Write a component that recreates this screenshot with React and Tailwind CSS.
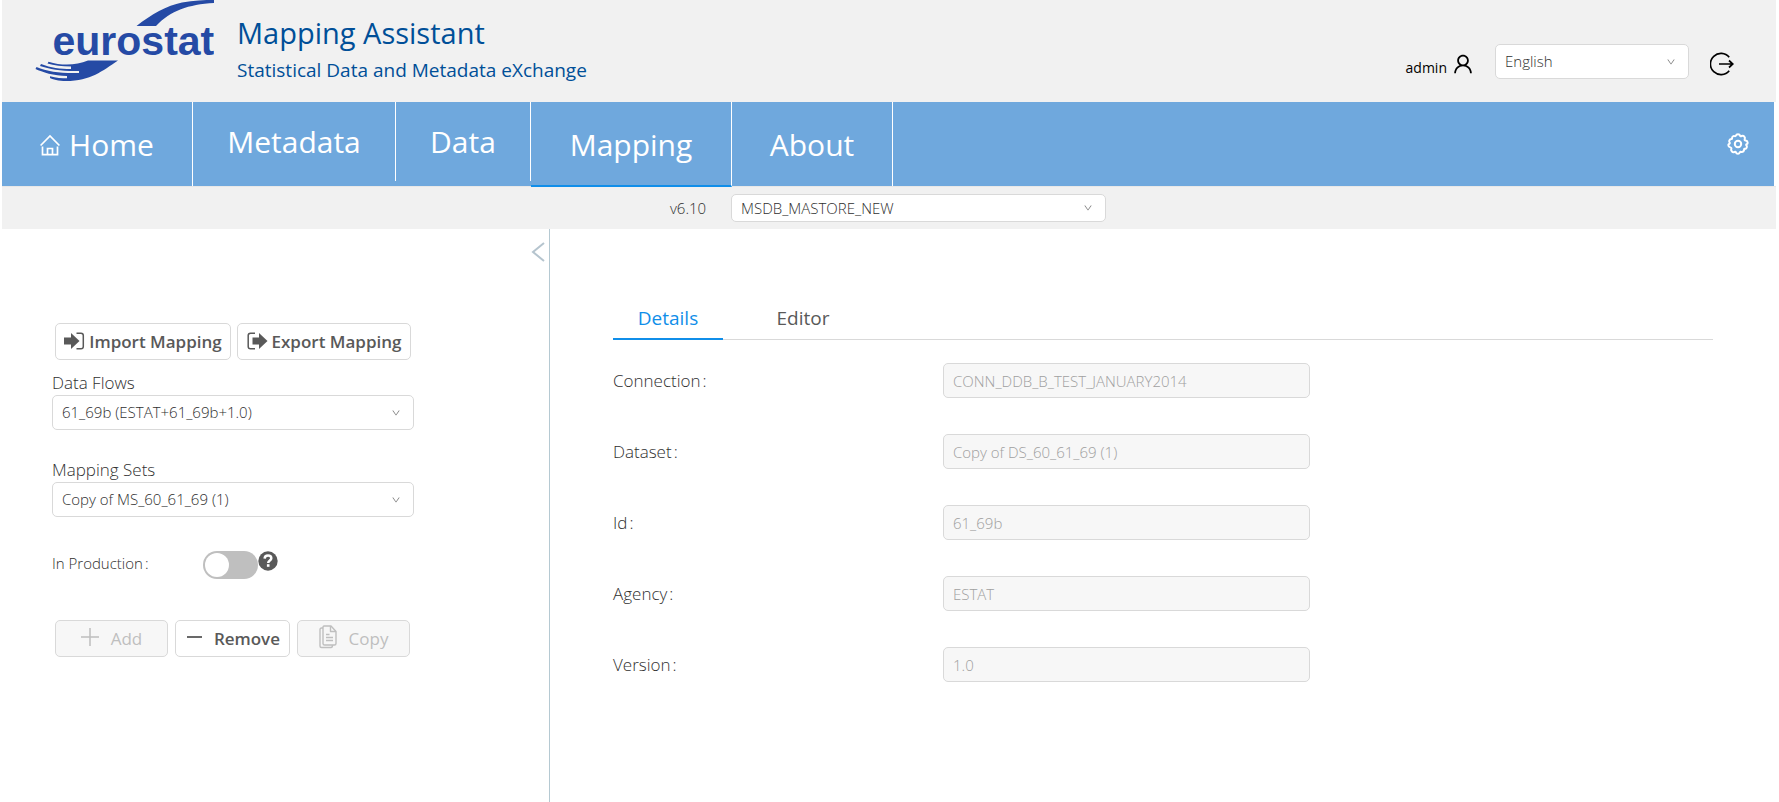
import React from "react";
import { AiOutlineUser, AiOutlineDown } from "react-icons/ai";

const FIELDS = [
  ["connection", "Connection", "CONN_DDB_B_TEST_JANUARY2014"],
  ["dataset", "Dataset", "Copy of DS_60_61_69 (1)"],
  ["id", "Id", "61_69b"],
  ["agency", "Agency", "ESTAT"],
  ["version", "Version", "1.0"],
];

function Select({ id, label, value, className = "h-[35px]" }) {
  return (
    <div className="grid items-center">
      <select
        id={id}
        aria-label={label}
        className={`col-start-1 row-start-1 w-full appearance-none rounded-[5px] border border-[#d9d9d9] bg-white pl-[9px] pr-8 text-[15px] font-light text-[#303030] outline-none ${className}`}
      >
        <option>{value}</option>
      </select>
      <AiOutlineDown className="pointer-events-none col-start-1 row-start-1 mr-[13px] size-[10px] justify-self-end text-[#777777]" />
    </div>
  );
}

function Logo() {
  return (
    <svg viewBox="0 0 184 84" className="h-[84px] w-[184px] shrink-0" role="img" aria-label="eurostat">
      <g fill="#254aa5">
        <path d="M106.500 26C121 14.500 137 5.500 152 2.500C164 0.500 174 0 184 0V3C158 4.500 141 10.500 126 26Z" />
        <text x="22.500" y="54.500" fontSize="41" fontWeight="700" fontFamily="'Liberation Sans', Arial, sans-serif">eurostat</text>
        <path d="M58 60.500H88C72 71 61 81 36 81C29 81 22 79.500 20 78V76.300C26 78 32 78.300 37 78.300V76C24 76 12 72 5.500 69L6.500 67C18 72 32 73.500 49 73V71C34 71.500 20 69.500 10 66L11 64C21 68 30 69 41 69V66.500C32 66.500 24 65.500 17.500 63.500L18.500 61.700C32 66 46 65.500 58 60.500Z" />
      </g>
    </svg>
  );
}

function HomeIcon() {
  return (
    <svg viewBox="0 0 20 22" className="mt-[2px] h-[22px] w-5" fill="none" stroke="currentColor" strokeWidth="1.700">
      <path d="M0.600 11.500L10 2L19.400 11.500" />
      <path d="M2.500 12.500V20.700H17.500V12.500M7.500 20.500V14.500H12.500V20.500" />
    </svg>
  );
}

function LogoutIcon() {
  return (
    <svg viewBox="0 0 24 24" className="size-6" fill="none" stroke="currentColor" strokeWidth="1.700">
      <path d="M19.200 5.300A10.600 10.600 0 1 0 19.200 18.700" />
      <path d="M9 12H22.500M19 8.500L22.800 12L19 15.500" />
    </svg>
  );
}

function GearIcon() {
  return (
    <svg viewBox="0 0 22 22" className="size-[22px]" fill="none" stroke="currentColor" strokeWidth="2" strokeLinejoin="round">
      <path d="M9 2.500Q9.300 1.200 11 1.200Q12.700 1.200 13 2.500Q13.300 3.600 14.600 3Q16.200 2.300 17.300 3.600Q18.400 4.900 17.700 6.100Q17.300 7.300 18.700 7.600Q20.600 8 20.700 9.800Q20.600 11 19.400 11.300Q18.800 11.800 19.600 12.600Q20.400 14 19.300 15.200Q18.400 16 17.600 15.700Q16.900 15.800 17.100 17Q16.800 18.800 15 19Q14 18.900 13.500 18.700Q13 18.800 12.700 19.700Q12.200 20.800 11 20.800Q9.300 20.800 9 19.500Q8.700 18.400 7.400 19Q5.800 19.500 4.800 18.300Q3.700 17.100 4.300 15.900Q4.700 14.800 3.300 14.400Q1.300 13.800 1.300 12Q1.500 11 2.500 10.700Q3.200 10.200 2.500 9.300Q1.600 8 2.800 6.700Q3.600 5.900 4.500 6.100Q5.300 6 5 5Q5.200 3.300 6.900 2.900Q8.600 3.500 9 2.500Z" />
      <circle cx="11" cy="11" r="3.200" />
    </svg>
  );
}

function ImportIcon() {
  return (
    <svg viewBox="0 0 21 18" className="mb-[3px] h-[18px] w-[21px]" fill="currentColor">
      <path d="M0 5.500H7V1L15.500 9L7 17V12.500H0Z" />
      <path d="M12.500 1.200H17Q19.300 1.200 19.300 3.500V14.500Q19.300 16.800 17 16.800H12.500" fill="none" stroke="currentColor" strokeWidth="1.500" />
    </svg>
  );
}

function ExportIcon() {
  return (
    <svg viewBox="0 0 21 18" className="mb-[3px] h-[18px] w-[21px]" fill="currentColor">
      <path d="M5.500 5.500H12V1L20.500 9L12 17V12.500H5.500Z" />
      <path d="M8 1.200H3.500Q1.200 1.200 1.200 3.500V14.500Q1.200 16.800 3.500 16.800H8" fill="none" stroke="currentColor" strokeWidth="1.500" />
    </svg>
  );
}

function CopyIcon() {
  return (
    <svg viewBox="0 0 18 24" className="mb-1 h-6 w-[18px]" fill="none" stroke="currentColor" strokeWidth="1.400" strokeLinejoin="round">
      <path d="M5 1H12L17 6.500V18.500Q17 20 15.500 20H5.500Q4 20 4 18.500V2.500Q4 1 5 1Z" />
      <path d="M11.500 1V6.500H17M4 3H2.500Q1 3 1 4.500V21Q1 22.500 2.500 22.500H12Q13.500 22.500 13.500 20M7 9.500H10.500M7 12.500H14M7 15.500H14" />
    </svg>
  );
}

function PlusIcon() {
  return (
    <svg viewBox="0 0 18 18" className="mb-1 size-[18px]" stroke="currentColor" strokeWidth="1.500">
      <path d="M9 0V18M0 9H18" />
    </svg>
  );
}

function MinusIcon() {
  return (
    <svg viewBox="0 0 15 18" className="mb-1 h-[18px] w-[15px]" stroke="currentColor" strokeWidth="1.800">
      <path d="M0 9H15" />
    </svg>
  );
}

function HelpIcon() {
  return (
    <svg viewBox="0 0 20 20" className="size-5">
      <circle cx="10" cy="10" r="9.700" fill="#595959" />
      <path d="M6.600 7.600C6.700 5.500 8.200 4.500 10 4.500C12 4.500 13.300 5.600 13.300 7.200C13.300 9.400 10.200 9.500 10.200 12" fill="none" stroke="#fff" strokeWidth="2.500" />
      <rect x="8.900" y="13.200" width="2.600" height="2.600" fill="#fff" />
    </svg>
  );
}

function NavItem({ children, className = "" }) {
  return (
    <a href="#" className={`flex items-center justify-center border-r border-white ${className}`}>
      {children}
    </a>
  );
}

const BUTTON = "flex h-[37px] items-center rounded-[5px] border border-[#d9d9d9] pt-px text-[17px]";

export default function App() {
  return (
    <div className="flex min-h-screen flex-col bg-white px-[2px] font-['Open_Sans','Noto_Sans',sans-serif] text-[#595959]">
      <header className="mr-px flex h-[102px] items-start bg-[#f1f1f1] pl-[28px] pr-[42px]">
        <Logo />
        <div className="flex flex-1 flex-col gap-1 pl-[23px] pt-[14px] text-[#004f98]">
          <h1 className="text-[29px] leading-[38px]">Mapping Assistant</h1>
          <p className="text-[19px] leading-7">Statistical Data and Metadata eXchange</p>
        </div>
        <div className="flex items-center pt-11 text-black">
          <span className="pt-3 text-sm">admin</span>
          <AiOutlineUser className="ml-1 mt-1 size-6" />
          <div className="ml-5 w-[194px]">
            <Select label="Language" value="English" />
          </div>
          <button aria-label="Log out" className="ml-[21px] pt-1">
            <LogoutIcon />
          </button>
        </div>
      </header>

      <nav className="relative mr-[3px] flex h-[84px] bg-[#6fa8dd] text-[30px] text-white">
        <NavItem className="w-[191px] gap-[9px]">
          <HomeIcon />
          Home
        </NavItem>
        <NavItem className="mb-[5px] w-[203px]">Metadata</NavItem>
        <NavItem className="mb-[5px] w-[135px]">Data</NavItem>
        <NavItem className="-mb-px w-[201px] border-b-2 border-b-[#108ee9] pt-[2px]">Mapping</NavItem>
        <NavItem className="w-[161px]">About</NavItem>
        <button aria-label="Settings" className="ml-auto mr-[25px]">
          <GearIcon />
        </button>
      </nav>

      <div className="mr-px flex h-[43px] items-center justify-center border-t border-[#e8e8e8] bg-[#f1f1f1] pr-[2px]">
        <label htmlFor="store" className="mr-[25px] text-[15px] font-light text-[#303030]">v6.10</label>
        <div className="w-[375px]">
          <Select id="store" value="MSDB_MASTORE_NEW" className="h-7" />
        </div>
      </div>

      <main className="flex flex-1">
        <aside className="flex w-[548px] shrink-0 flex-col border-r border-[#b5c9d2] pl-[50px]">
          <button aria-label="Collapse panel" className="mr-[4px] mt-[13px] self-end text-[#b5c4ce]">
            <svg viewBox="0 0 14 20" className="h-5 w-[14px]" fill="none" stroke="currentColor" strokeWidth="2">
              <path d="M13 1L2 10L13 19" />
            </svg>
          </button>
          <div className="mt-[61px] flex gap-[6px] pl-[3px] font-semibold">
            <button className={`${BUTTON} w-[176px] justify-center gap-1`}>
              <ImportIcon />
              Import Mapping
            </button>
            <button className={`${BUTTON} w-[174px] justify-center gap-1`}>
              <ExportIcon />
              Export Mapping
            </button>
          </div>
          <div className="flex w-[362px] flex-col">
            <label htmlFor="flows" className="mt-[10px] text-[17px] leading-[25px] font-light text-[#303030]">Data Flows</label>
            <Select id="flows" value="61_69b (ESTAT+61_69b+1.0)" />
            <label htmlFor="sets" className="mt-[27px] text-[17px] leading-[25px] font-light text-[#303030]">Mapping Sets</label>
            <Select id="sets" value="Copy of MS_60_61_69 (1)" />
          </div>
          <div className="mt-[34px] flex h-7 items-center">
            <label htmlFor="production" className="flex w-[151px] gap-[2px] pb-[3px] text-[15px] font-light text-[#303030]">In Production<span>:</span></label>
            <input
              id="production"
              type="checkbox"
              className="h-7 w-[55px] appearance-none rounded-full bg-[#bfbfbf] before:m-[2px] before:block before:size-6 before:rounded-full before:bg-white"
            />
            <span className="self-start"><HelpIcon /></span>
          </div>
          <div className="mt-[41px] flex gap-[7px] pl-[3px] font-semibold">
            <button disabled className={`${BUTTON} w-[113px] justify-center gap-3 bg-[#f7f7f7] font-normal text-[#bfbfbf]`}>
              <PlusIcon />
              Add
            </button>
            <button className={`${BUTTON} w-[115px] justify-end gap-3 pr-[9px]`}>
              <MinusIcon />
              Remove
            </button>
            <button disabled className={`${BUTTON} w-[113px] justify-center gap-3 bg-[#f7f7f7] font-normal text-[#bfbfbf]`}>
              <CopyIcon />
              Copy
            </button>
          </div>
        </aside>

        <section className="flex-1 pl-[63px] pr-[64px] pt-[69px]">
          <div role="tablist" className="flex h-[42px] gap-[30px] border-b border-[#d9d9d9] text-[19px]">
            <button role="tab" aria-selected="true" className="-mb-px w-[110px] border-b-2 border-[#108ee9] text-[#108ee9]">Details</button>
            <button role="tab" aria-selected="false" className="w-[100px]">Editor</button>
          </div>
          <div className="mt-[23px] flex flex-col gap-9">
            {FIELDS.map(([id, label, value]) => (
              <div key={id} className="flex items-center">
                <label htmlFor={id} className="flex w-[30%] gap-[2px] text-[17px] font-light text-[#303030]">{label}<span>:</span></label>
                <input
                  id={id}
                  disabled
                  defaultValue={value}
                  className="h-[35px] w-[367px] rounded-[5px] border border-[#d9d9d9] bg-[#f7f7f7] px-[9px] text-[15px] font-light text-[#a0a0a0]"
                />
              </div>
            ))}
          </div>
        </section>
      </main>
    </div>
  );
}
